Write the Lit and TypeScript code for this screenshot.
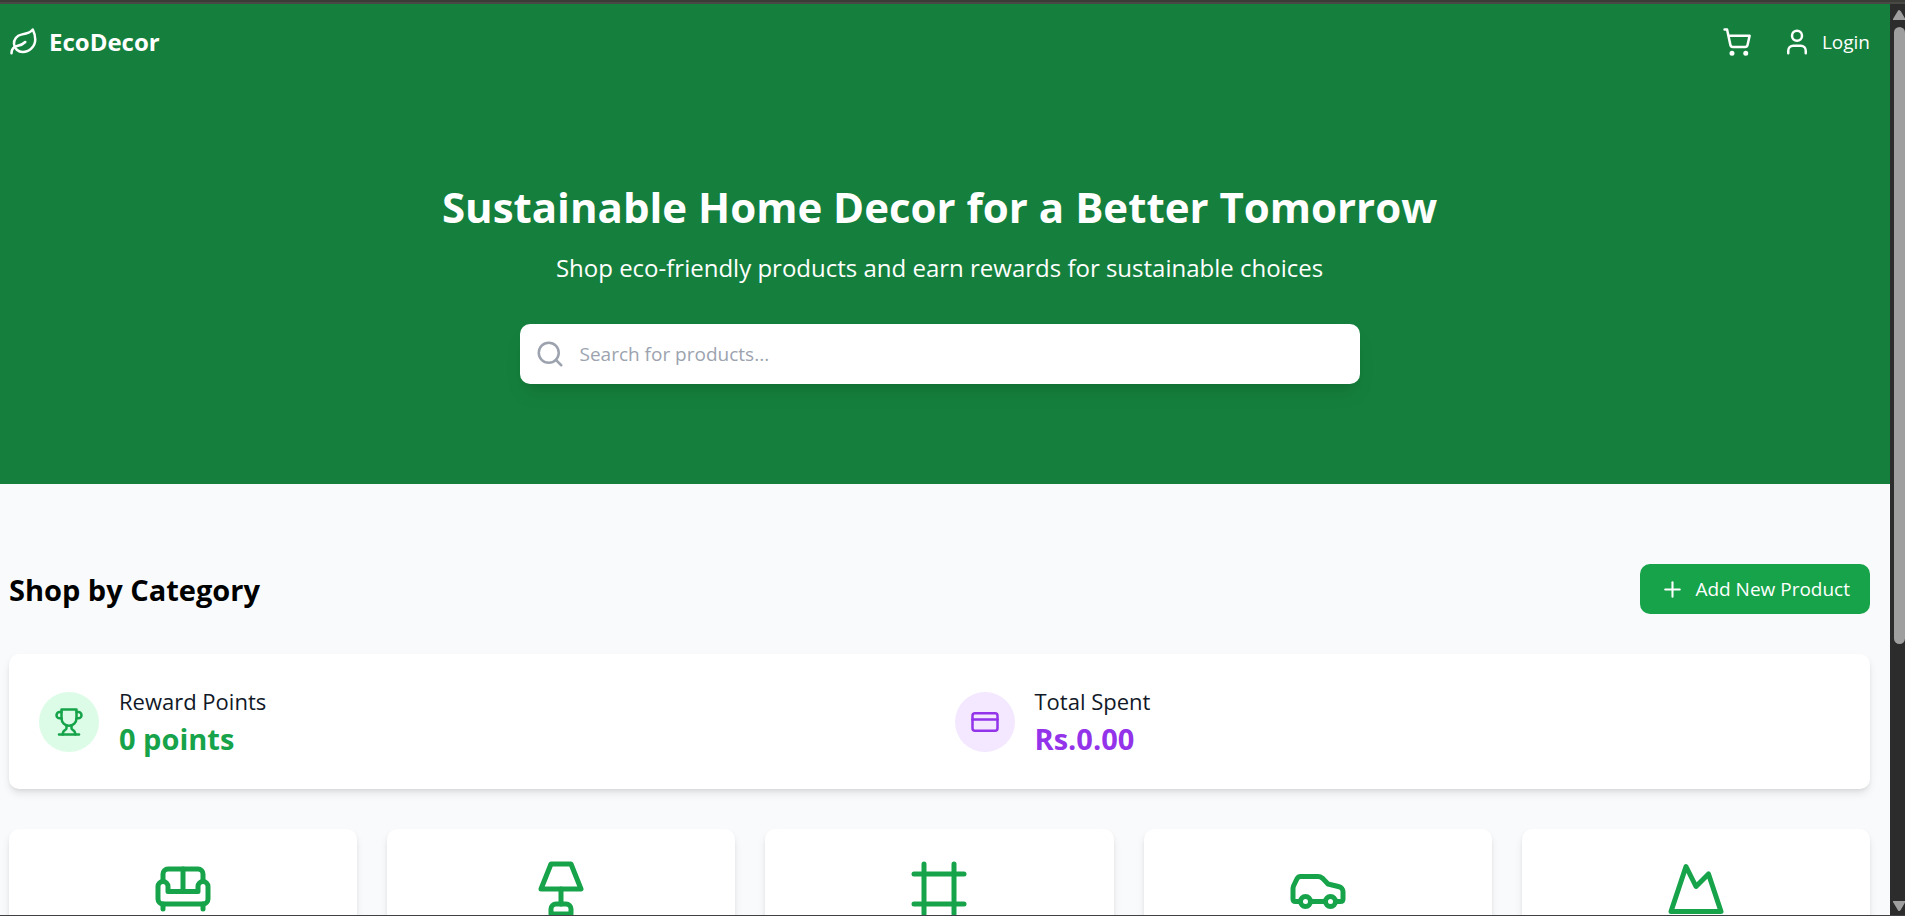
import { LitElement, html, css, svg } from "lit";
import { customElement, property, state } from "lit/decorators.js";

const ICONS = {
  leaf: svg`<path d="M11 20A7 7 0 0 1 9.8 6.1C15.5 5 17 4.48 19 2c1 2 2 4.18 2 8 0 5.5-4.78 10-10 10Z"/><path d="M2 21c0-3 1.85-5.36 5.08-6C9.5 14.52 12 13 13 12"/>`,
  cart: svg`<circle cx="8" cy="21" r="1"/><circle cx="19" cy="21" r="1"/><path d="M2.05 2.05h2l2.66 12.42a2 2 0 0 0 2 1.58h9.78a2 2 0 0 0 1.95-1.57l1.65-7.43H5.12"/>`,
  user: svg`<path d="M19 21v-2a4 4 0 0 0-4-4H9a4 4 0 0 0-4 4v2"/><circle cx="12" cy="7" r="4"/>`,
  search: svg`<circle cx="11" cy="11" r="8"/><path d="m21 21-4.3-4.3"/>`,
  plus: svg`<path d="M5 12h14"/><path d="M12 5v14"/>`,
  trophy: svg`<path d="M6 9H4.5a2.5 2.5 0 0 1 0-5H6"/><path d="M18 9h1.5a2.5 2.5 0 0 0 0-5H18"/><path d="M4 22h16"/><path d="M10 14.66V17c0 .55-.47.98-.97 1.21C7.85 18.75 7 20.24 7 22"/><path d="M14 14.66V17c0 .55.47.98.97 1.21C16.15 18.75 17 20.24 17 22"/><path d="M18 2H6v7a6 6 0 0 0 12 0V2Z"/>`,
  card: svg`<rect width="20" height="14" x="2" y="5" rx="2"/><path d="M2 10h20"/>`,
  sofa: svg`<path d="M20 9V6a2 2 0 0 0-2-2H6a2 2 0 0 0-2 2v3"/><path d="M2 11v5a2 2 0 0 0 2 2h16a2 2 0 0 0 2-2v-5a2 2 0 0 0-4 0v2H6v-2a2 2 0 0 0-4 0Z"/><path d="M4 18v2"/><path d="M20 18v2"/><path d="M12 4v9"/>`,
  lamp: svg`<path d="M8 2h8l4 10H4L8 2Z"/><path d="M12 12v6"/><path d="M8 22v-2c0-1.1.9-2 2-2h4a2 2 0 0 1 2 2v2H8Z"/>`,
  frame: svg`<path d="M22 6H2"/><path d="M22 18H2"/><path d="M6 2v20"/><path d="M18 2v20"/>`,
  car: svg`<path d="M19 17h2c.6 0 1-.4 1-1v-3c0-.9-.7-1.7-1.5-1.9C18.7 10.6 16 10 16 10s-1.3-1.4-2.2-2.3c-.5-.4-1.1-.7-1.8-.7H5c-.6 0-1.1.4-1.4.9l-1.4 2.9A3.7 3.7 0 0 0 2 12v4c0 .6.4 1 1 1h2"/><circle cx="7" cy="17" r="2"/><path d="M9 17h6"/><circle cx="17" cy="17" r="2"/>`,
  mountain: svg`<path d="m8 3 4 8 5-5 5 15H2L8 3z"/>`,
};

type IconName = keyof typeof ICONS;

@customElement("eco-icon")
class EcoIcon extends LitElement {
  @property() name: IconName = "leaf";

  static styles = css`
    :host {
      display: block;
      flex: none;
      width: 30px;
      height: 30px;
    }
    .icon {
      display: block;
      width: 100%;
      height: 100%;
      fill: none;
      stroke: currentColor;
      stroke-width: 2;
      stroke-linecap: round;
      stroke-linejoin: round;
    }
  `;

  render() {
    return html`<svg class="icon" viewBox="0 0 24 24" aria-hidden="true">${ICONS[this.name]}</svg>`;
  }
}

@customElement("eco-scrollbar")
class EcoScrollbar extends LitElement {
  static styles = css`
    :host {
      display: flex;
      flex-direction: column;
      align-items: flex-end;
      box-sizing: border-box;
      padding: 6px 0 4px;
      background: #2c2c2c;
    }
    .arrow {
      display: block;
      flex: none;
      width: 12px;
      height: 10px;
      fill: #9f9f9f;
    }
    .track {
      flex: 1;
      display: grid;
      grid-template-rows: 12fr 5fr;
      width: 11px;
      padding: 7px 0 0;
    }
    .thumb {
      border-radius: 6px;
      background: #9f9f9f;
    }
  `;

  render() {
    return html`
      <svg class="arrow" viewBox="0 0 12 10"><path d="M6 0Q7 0 8 1.500L12 8.500V10H0V9L4.500 1.500Q5 0 6 0Z" /></svg>
      <div class="track"><div class="thumb"></div></div>
      <svg class="arrow" viewBox="0 0 12 10"><path d="M6 10Q7 10 8 8.500L12 1.500V0H0V1L4.500 8.500Q5 10 6 10Z" /></svg>
    `;
  }
}

@customElement("app-root")
class AppRoot extends LitElement {
  @state() private query = "";

  private categories: { label: string; icon: IconName }[] = [
    { label: "Furniture", icon: "sofa" },
    { label: "Lighting", icon: "lamp" },
    { label: "Wall Decor", icon: "frame" },
    { label: "Vehicles", icon: "car" },
    { label: "Outdoor", icon: "mountain" },
  ];

  private stats: { label: string; value: string; icon: IconName; tone: string }[] = [
    { label: "Reward Points", value: "0 points", icon: "trophy", tone: "green" },
    { label: "Total Spent", value: "Rs.0.00", icon: "card", tone: "purple" },
  ];

  static styles = css`
    :host {
      display: flex;
      flex-direction: column;
      box-sizing: border-box;
      height: 100vh;
      border-top: 2px solid #3b3b37;
      border-bottom: 1px solid #3f4145;
      font-family: "Open Sans", "Noto Sans", sans-serif;
      font-size: 19px;
      line-height: 30px;
      color: #000;
    }
    * {
      box-sizing: border-box;
    }
    .window {
      flex: 1;
      min-height: 0;
      display: grid;
      grid-template-columns: minmax(0, 1fr) 15px;
      border-top: 2px solid #484844;
    }
    .page {
      overflow: hidden;
      background: #f9fafb;
    }
    .top {
      background: #15803d;
      color: #fff;
    }
    .nav {
      display: flex;
      align-items: center;
      justify-content: space-between;
      padding: 20px 20px 20px 9px;
    }
    .brand,
    .actions,
    .link {
      display: flex;
      align-items: center;
      gap: 10px;
      color: inherit;
      text-decoration: none;
    }
    .brand {
      font-size: 24px;
      font-weight: 700;
      line-height: 35px;
    }
    .actions {
      gap: 30px;
    }
    .hero {
      display: flex;
      flex-direction: column;
      align-items: center;
      padding: 100px 20px 100px 9px;
      text-align: center;
    }
    .title {
      margin: 0 0 15px;
      font-size: 42px;
      font-weight: 700;
      line-height: 56px;
    }
    .subtitle {
      margin: 0 0 39px;
      font-size: 24px;
      line-height: 35px;
    }
    .search {
      display: flex;
      align-items: center;
      gap: 15px;
      width: 100%;
      max-width: 840px;
      height: 60px;
      padding: 0 15px;
      border-radius: 10px;
      background: #fff;
      color: #9ca3af;
      box-shadow: 0 12px 19px -4px rgb(0 0 0 / 0.1), 0 5px 8px -5px rgb(0 0 0 / 0.1);
    }
    .field {
      flex: 1;
      min-width: 0;
      padding: 0;
      border: 0;
      outline: 0;
      background: none;
      font: inherit;
      color: #111827;
    }
    .field::placeholder {
      color: #9ca3af;
      opacity: 1;
    }
    .shop {
      padding: 80px 20px 80px 9px;
      display: grid;
      gap: 40px;
    }
    .heading {
      display: flex;
      align-items: center;
      justify-content: space-between;
    }
    .name {
      margin: 0;
      padding-top: 2px;
      font-size: 29px;
      line-height: 40px;
      font-weight: 700;
    }
    .add {
      display: flex;
      align-items: center;
      gap: 10px;
      padding: 10px 20px;
      border: 0;
      border-radius: 10px;
      background: #16a34a;
      color: #fff;
      font: inherit;
    }
    .small {
      width: 25px;
      height: 25px;
    }
    .panel {
      border-radius: 10px;
      background: #fff;
      box-shadow: 0 5px 8px -1px rgb(0 0 0 / 0.1), 0 2px 5px -2px rgb(0 0 0 / 0.1);
    }
    .stats {
      display: grid;
      grid-template-columns: 1fr 1fr;
      gap: 30px;
      padding: 30px;
    }
    .stat {
      display: flex;
      align-items: center;
      gap: 20px;
    }
    .badge {
      display: grid;
      place-items: center;
      width: 60px;
      height: 60px;
      border-radius: 50%;
    }
    .label {
      margin: 0;
      font-size: 22px;
      font-weight: 500;
      line-height: 35px;
      color: #111827;
    }
    .value {
      margin: 0;
      font-size: 29px;
      font-weight: 700;
      line-height: 40px;
    }
    .green .badge {
      background: #dcfce7;
    }
    .green .badge,
    .green .value {
      color: #16a34a;
    }
    .purple .badge {
      background: #f3e8ff;
    }
    .purple .badge,
    .purple .value {
      color: #9333ea;
    }
    .categories {
      display: grid;
      grid-template-columns: repeat(5, 1fr);
      gap: 30px;
    }
    .category {
      display: flex;
      justify-content: center;
      padding: 30px 30px 90px;
      color: #16a34a;
    }
    .large {
      width: 60px;
      height: 60px;
    }
  `;

  render() {
    return html`
      <div class="window">
        <div class="page">
          <div class="top">
            <header class="nav">
              <a class="brand" href="#"><eco-icon name="leaf"></eco-icon>EcoDecor</a>
              <nav class="actions">
                <a class="link" href="#cart" aria-label="Cart"><eco-icon name="cart"></eco-icon></a>
                <a class="link" href="#login"><eco-icon name="user"></eco-icon>Login</a>
              </nav>
            </header>
            <section class="hero">
              <h1 class="title">Sustainable Home Decor for a Better Tomorrow</h1>
              <p class="subtitle">Shop eco-friendly products and earn rewards for sustainable choices</p>
              <label class="search">
                <eco-icon name="search"></eco-icon>
                <input
                  class="field"
                  type="text"
                  aria-label="Search for products"
                  placeholder="Search for products..."
                  .value=${this.query}
                  @input=${(e: Event) => (this.query = (e.target as HTMLInputElement).value)}
                />
              </label>
            </section>
          </div>
          <main class="shop">
            <div class="heading">
              <h2 class="name">Shop by Category</h2>
              <button class="add" type="button"><eco-icon class="small" name="plus"></eco-icon>Add New Product</button>
            </div>
            <section class="panel stats">
              ${this.stats.map(
                (s) => html`
                  <div class="stat ${s.tone}">
                    <div class="badge"><eco-icon name=${s.icon}></eco-icon></div>
                    <div>
                      <h3 class="label">${s.label}</h3>
                      <p class="value">${s.value}</p>
                    </div>
                  </div>
                `,
              )}
            </section>
            <section class="categories">
              ${this.categories.map(
                (c) => html`
                  <a class="panel category" href="#category" aria-label=${c.label}>
                    <eco-icon class="large" name=${c.icon}></eco-icon>
                  </a>
                `,
              )}
            </section>
          </main>
        </div>
        <eco-scrollbar aria-hidden="true"></eco-scrollbar>
      </div>
    `;
  }
}
